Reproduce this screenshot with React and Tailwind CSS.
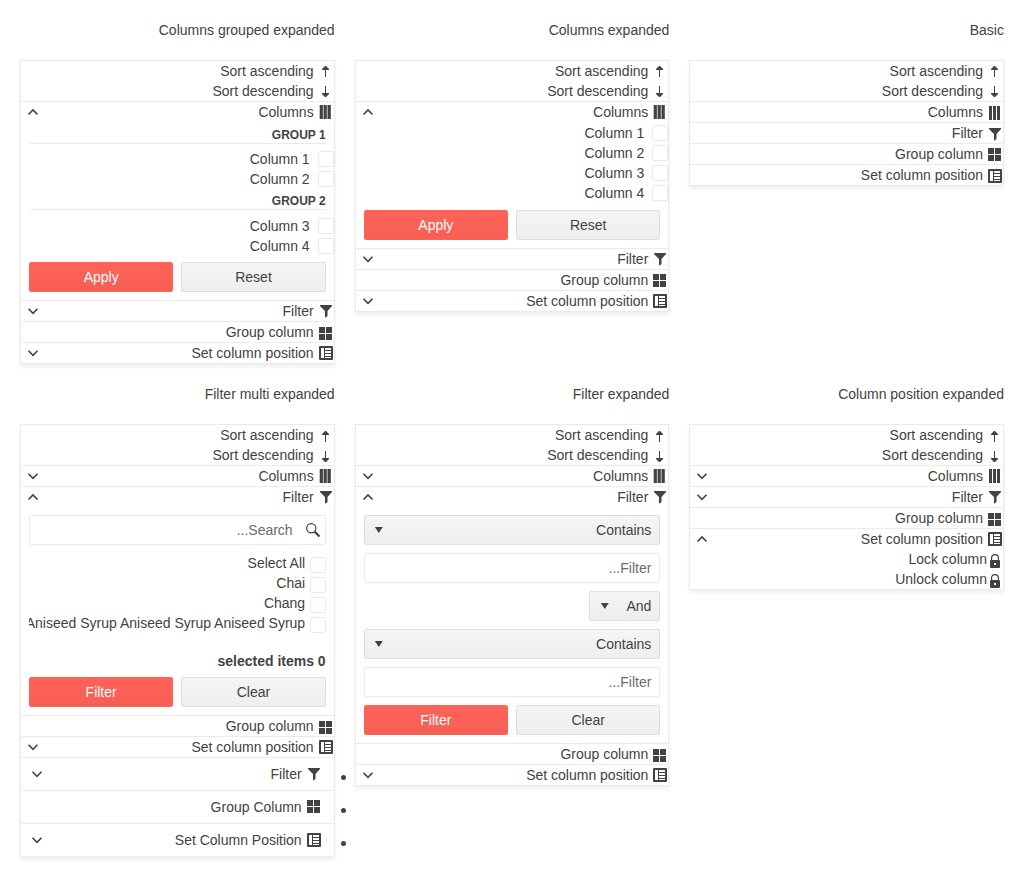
import React from "react";

const ICONS = {
  up: <path d="M7 13V6H4V5L7 2h1l3 3v1H8v7z" />,
  down: <path d="M7 2v7H4v1l3 3h1l3-3V9H8V2z" />,
  columns: <path d="M2 1h3v14H2zM6 1h3v14H6zM10 1h3v14h-3z" />,
  columnsTight: <path d="M1.700 1h3.200v14H1.700zM5.600 1h3.200v14H5.600zM9.500 1h3.300v14H9.500z" />,
  filter: <path d="M2 2h12v1L9.500 8v5L7 14.800V8L2 3z" />,
  group: <path d="M1 1h6v6H1zM8 1h6v6H8zM1 8h6v6H1zM8 8h6v6H8z" />,
  position: (
    <path
      fillRule="evenodd"
      d="M2 1h12q1 0 1 1v12q0 1-1 1H2q-1 0-1-1V2q0-1 1-1zM3 3v10h3V3zM7 3v2h6V3zM7 6v2h6V6zM7 9v2h6V9zM7 12v1h6v-1z"
    />
  ),
  lock: (
    <path
      fillRule="evenodd"
      d="M4 7V5Q4 1 8 1t4 4v2q1 0 1 1v6q0 1-1 1H4q-1 0-1-1V8q0-1 1-1zM5.200 7h5.600V5Q10.800 2.200 8 2.200T5.200 5zM7 10v2h2v-2z"
    />
  ),
  search: (
    <>
      <circle cx="6.300" cy="6.200" r="4.600" fill="none" stroke="currentColor" strokeWidth="1.200" />
      <path d="M9.500 9.500L14.500 14.500" fill="none" stroke="currentColor" strokeWidth="2.200" />
    </>
  ),
  chevronUp: <path d="M3.500 10.500L8 6l4.500 4.500" fill="none" stroke="currentColor" strokeWidth="1.600" />,
  chevronDown: <path d="M3.500 5.800L8 10.300l4.500-4.500" fill="none" stroke="currentColor" strokeWidth="1.600" />,
  caret: <path d="M3.800 5h8l-4 6z" />,
};

function Icon({ name, className = "" }) {
  return (
    <svg viewBox="0 0 16 16" fill="currentColor" className={`block size-4 shrink-0 ${className}`}>
      {ICONS[name]}
    </svg>
  );
}

function Item({ icon, label, state, low, bordered = true }) {
  const pad = state ? "mt-0.5" : low ? "mt-1" : "mt-[3px]";
  return (
    <div className={`flex justify-between ${bordered ? "h-[21px] border-t border-[#ebebeb]" : "h-5"}`}>
      <div className="pl-1 pt-0.5">
        {state && <Icon name={state === "open" ? "chevronUp" : "chevronDown"} />}
      </div>
      <div className="flex gap-1">
        <span>{label}</span>
        <Icon name={icon} className={pad} />
      </div>
    </div>
  );
}

function Sorting({ low }) {
  return (
    <>
      <Item icon="up" label="Sort ascending" low={low} bordered={false} />
      <Item icon="down" label="Sort descending" low={low} bordered={false} />
    </>
  );
}

function Panel({ title, children }) {
  return (
    <section>
      <h2 className="mb-5 text-right">{title}</h2>
      <div className="border border-[#ebebeb] bg-white shadow-[0_2px_4px_0_rgba(0,0,0,0.03),0_4px_5px_0_rgba(0,0,0,0.04)]">
        {children}
      </div>
    </section>
  );
}

function Checkbox() {
  return <span className="size-4 shrink-0 rounded-[2px] border border-[#ebebeb] bg-white" />;
}

function ColumnChoice({ label }) {
  return (
    <label className="flex h-5 items-center justify-end gap-2">
      {label}
      <Checkbox />
    </label>
  );
}

function Actions({ primary, secondary }) {
  return (
    <div className="flex gap-2">
      <button className="h-[30px] flex-1 rounded-[2px] border border-[#ff6358] bg-linear-to-b from-[#ff6358] to-[#f65f55] text-white">
        {primary}
      </button>
      <button className="h-[30px] flex-1 rounded-[2px] border border-[#dedede] bg-linear-to-b from-[#f5f5f5] to-[#eeeeee]">
        {secondary}
      </button>
    </div>
  );
}

function Dropdown({ label, small }) {
  return (
    <div
      className={`flex h-[30px] items-center justify-between self-end rounded-[2px] border border-[#dedede] bg-linear-to-b from-[#f5f5f5] to-[#eeeeee] pr-2 ${
        small ? "w-[71px] pl-[7px]" : "w-full pl-1.5"
      }`}
    >
      <Icon name="caret" />
      {label}
    </div>
  );
}

function Field({ text, icon }) {
  return (
    <div className="flex h-[30px] items-center justify-end rounded-[2px] border border-[#ebebeb] pr-2 text-[#6b6b6b]">
      {text}
      {icon && <Icon name={icon} className="-mr-1 ml-3 text-[#424242]" />}
    </div>
  );
}

function GroupHeading({ children, className }) {
  return (
    <div className={`mx-2 border-b border-[#ebebeb] text-right text-xs leading-[15px] font-bold uppercase ${className}`}>
      {children}
    </div>
  );
}

function FilterChoice({ label }) {
  return (
    <label className="flex h-5 justify-end gap-[4.5px]">
      <span className="whitespace-nowrap">{label}</span>
      <span className="flex pt-1">
        <Checkbox />
      </span>
    </label>
  );
}

function WideItem({ icon, label, expandable }) {
  return (
    <li className="relative flex h-[33px] items-start justify-between border-t border-[#ebebeb] px-3 pt-2">
      <div className="-ml-1">{expandable && <Icon name="chevronDown" />}</div>
      <div className="flex gap-1">
        <span className="-mt-0.5">{label}</span>
        <Icon name={icon} />
      </div>
      <span className="absolute top-[16.5px] -right-[12px] size-[5px] rounded-full bg-[#424242]" />
    </li>
  );
}

export default function App() {
  return (
    <main className="grid w-full grid-cols-3 items-start gap-5 bg-white p-5 font-['Liberation_Sans',Arial,sans-serif] text-sm leading-5 text-[#424242]">
      <Panel title="Columns grouped expanded">
        <Sorting />
        <Item icon="columnsTight" label="Columns" state="open" />
        <GroupHeading className="mb-[5px] pt-1.5">Group 1</GroupHeading>
        <ColumnChoice label="Column 1" />
        <ColumnChoice label="Column 2" />
        <GroupHeading className="mb-1.5 pt-[5px]">Group 2</GroupHeading>
        <ColumnChoice label="Column 3" />
        <ColumnChoice label="Column 4" />
        <div className="px-2 pt-1.5 pb-2">
          <Actions primary="Apply" secondary="Reset" />
        </div>
        <Item icon="filter" label="Filter" state="closed" />
        <Item icon="group" label="Group column" low />
        <Item icon="position" label="Set column position" state="closed" />
      </Panel>

      <Panel title="Columns expanded">
        <Sorting />
        <Item icon="columnsTight" label="Columns" state="open" />
        <div className="pt-px">
          <ColumnChoice label="Column 1" />
          <ColumnChoice label="Column 2" />
          <ColumnChoice label="Column 3" />
          <ColumnChoice label="Column 4" />
        </div>
        <div className="px-2 pt-[7px] pb-2">
          <Actions primary="Apply" secondary="Reset" />
        </div>
        <Item icon="filter" label="Filter" state="closed" />
        <Item icon="group" label="Group column" />
        <Item icon="position" label="Set column position" state="closed" />
      </Panel>

      <Panel title="Basic">
        <Sorting />
        <Item icon="columns" label="Columns" />
        <Item icon="filter" label="Filter" />
        <Item icon="group" label="Group column" />
        <Item icon="position" label="Set column position" />
      </Panel>

      <Panel title="Filter multi expanded">
        <Sorting low />
        <Item icon="columnsTight" label="Columns" state="closed" />
        <Item icon="filter" label="Filter" state="open" />
        <div className="p-2">
          <Field text="...Search" icon="search" />
          <div className="mt-2 h-[90px] overflow-hidden">
            <FilterChoice label="Select All" />
            <FilterChoice label="Chai" />
            <FilterChoice label="Chang" />
            <FilterChoice label="Aniseed Syrup Aniseed Syrup Aniseed Syrup" />
          </div>
          <div className="mt-2 mb-1.5 text-right font-bold">selected items 0</div>
          <Actions primary="Filter" secondary="Clear" />
        </div>
        <Item icon="group" label="Group column" low />
        <Item icon="position" label="Set column position" state="closed" />
        <ul>
          <WideItem icon="filter" label="Filter" expandable />
          <WideItem icon="group" label="Group Column" />
          <WideItem icon="position" label="Set Column Position" expandable />
        </ul>
      </Panel>

      <Panel title="Filter expanded">
        <Sorting low />
        <Item icon="columnsTight" label="Columns" state="closed" />
        <Item icon="filter" label="Filter" state="open" />
        <div className="flex flex-col gap-2 p-2">
          <Dropdown label="Contains" />
          <Field text="...Filter" />
          <Dropdown label="And" small />
          <Dropdown label="Contains" />
          <Field text="...Filter" />
          <Actions primary="Filter" secondary="Clear" />
        </div>
        <Item icon="group" label="Group column" low />
        <Item icon="position" label="Set column position" state="closed" />
      </Panel>

      <Panel title="Column position expanded">
        <Sorting low />
        <Item icon="columns" label="Columns" state="closed" />
        <Item icon="filter" label="Filter" state="closed" />
        <Item icon="group" label="Group column" low />
        <Item icon="position" label="Set column position" state="open" />
        <div className="flex h-5 justify-end">
          Lock column
          <Icon name="lock" className="mt-1" />
        </div>
        <div className="flex h-5 justify-end">
          Unlock column
          <Icon name="lock" className="mt-1" />
        </div>
      </Panel>
    </main>
  );
}
